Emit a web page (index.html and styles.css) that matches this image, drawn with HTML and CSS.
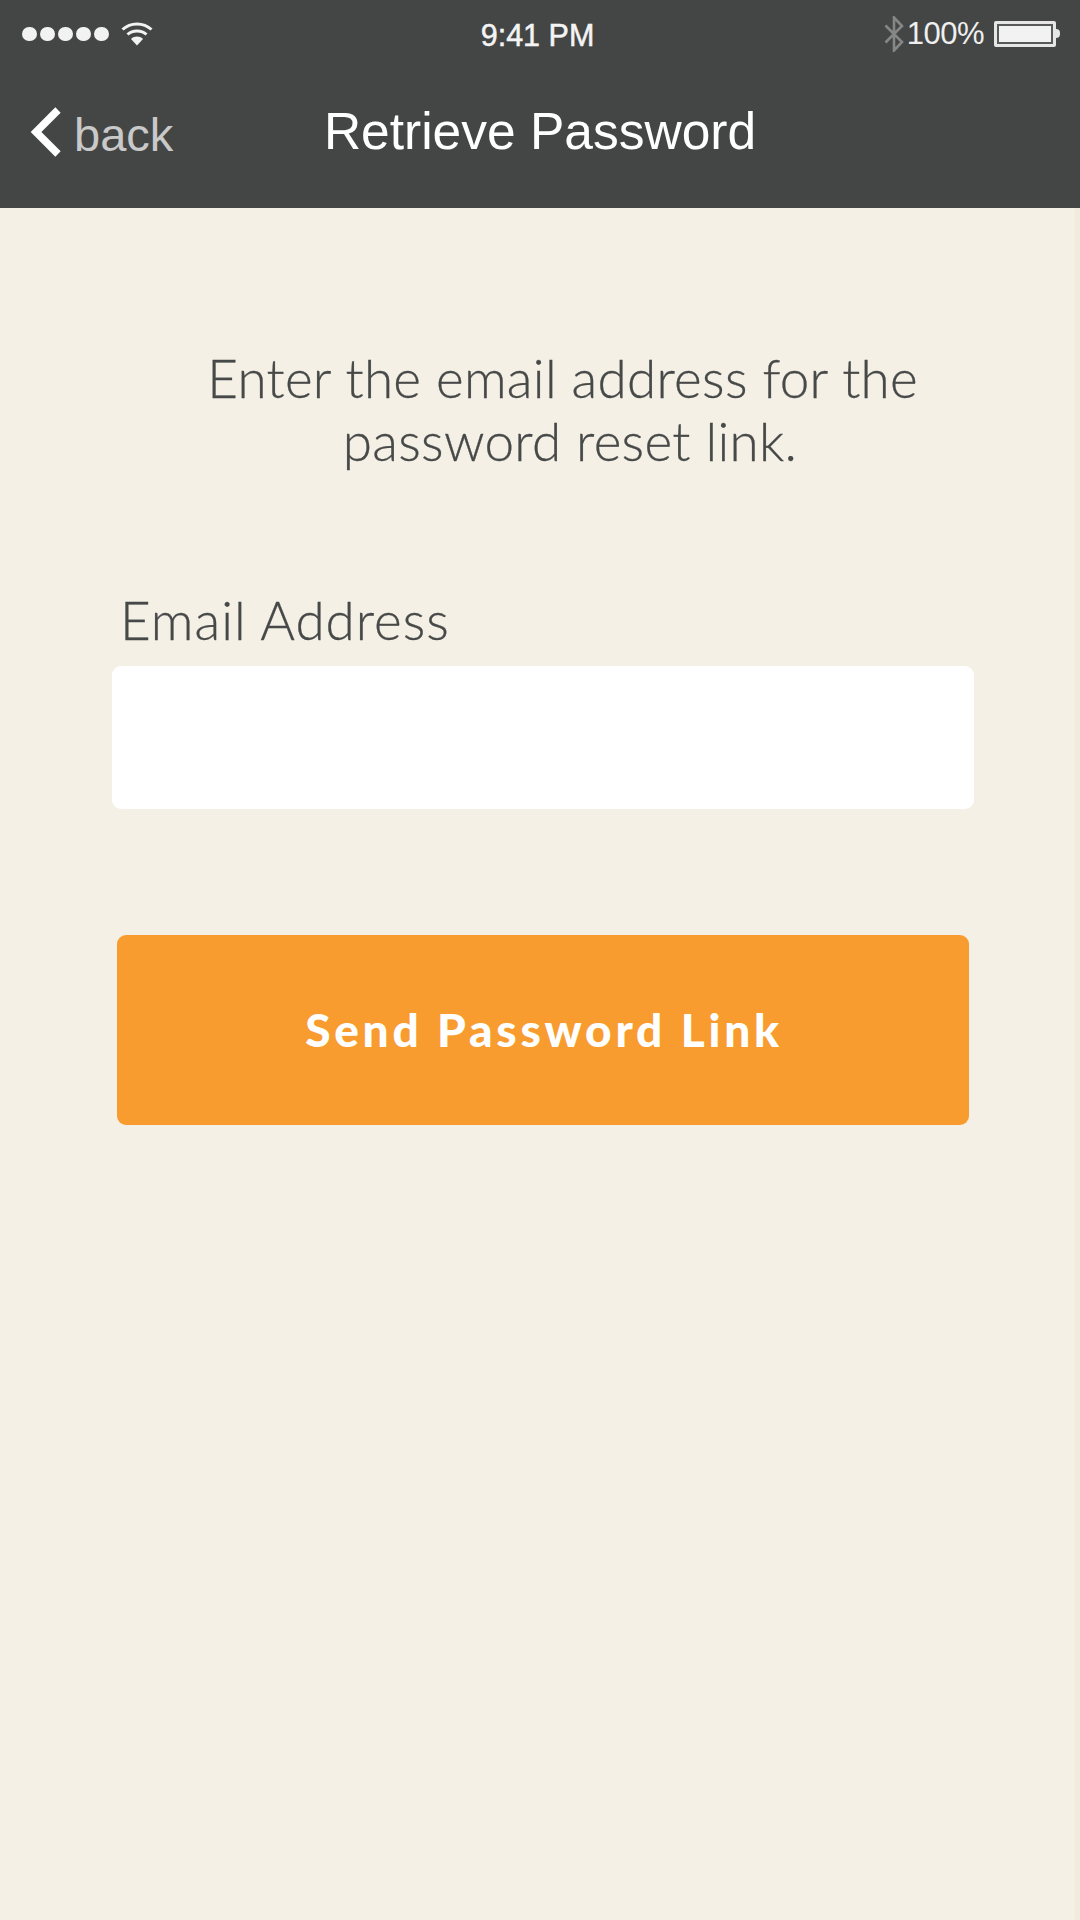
FILE: index.html
```html
<!DOCTYPE html>
<html lang="en">
<head>
<meta charset="utf-8">
<title>Retrieve Password</title>
<link rel="stylesheet" href="styles.css">
</head>
<body>
<div class="screen">
  <header class="topbar">
    <div class="status">
      <div class="status-left">
        <span class="dots"><i></i><i></i><i></i><i></i><i></i></span>
        <svg class="wifi" width="32" height="26" viewBox="0 0 32 26">
          <path d="M1.5 8.5C9.5 1 22.5 1 30.5 8.5" fill="none" stroke="#f2f2f2" stroke-width="3"/>
          <path d="M6.5 13.5C11.5 8.8 20.5 8.8 25.5 13.5" fill="none" stroke="#f2f2f2" stroke-width="3"/>
          <path d="M10 18L16 24.5L22 18C18.5 14.8 13.5 14.8 10 18Z" fill="#f2f2f2"/>
        </svg>
      </div>
      <div class="status-time">9:41 PM</div>
      <div class="status-right">
        <svg class="bt" width="20" height="36" viewBox="0 0 20 36">
          <path d="M1.5 9.5L18 26L10 34.500V1.500L18 10L1.500 26.500" fill="none" stroke="#868686" stroke-width="2.600"/>
        </svg>
        <span class="pct">100%</span>
        <span class="battery"><span class="battery-fill"></span></span>
      </div>
    </div>
    <div class="navbar">
      <div class="back">
        <svg class="chevron" width="32" height="52" viewBox="0 0 32 52">
          <path d="M28 4L6 26L28 48" fill="none" stroke="#fff" stroke-width="7.500"/>
        </svg>
        <span class="back-label">back</span>
      </div>
      <h1 class="title">Retrieve Password</h1>
      <div></div>
    </div>
  </header>
  <main class="content">
    <p class="intro">Enter the email address for the&nbsp;<br>password reset link.</p>
    <label class="field-label" for="email">Email Address</label>
    <input class="field" id="email" type="text">
    <button class="send" type="button">Send Password Link</button>
  </main>
</div>
</body>
</html>
```
FILE: styles.css
```css
* { box-sizing: border-box; }
html, body { margin: 0; padding: 0; }
body { width: 1080px; height: 1920px; overflow: hidden; font-family: "Liberation Sans", Arial, sans-serif; }
.screen { width: 1080px; height: 1920px; display: flex; flex-direction: column; background: #f4f0e6; }

.topbar { height: 208px; background: #444645; color: #fff; flex: none; }
.status { height: 68px; display: grid; grid-template-columns: 1fr auto 1fr; align-items: center; padding: 0 21px 0 22px; }
.status-left { display: flex; align-items: center; gap: 12px; }
.dots { display: flex; gap: 3.500px; }
.dots i { width: 14.500px; height: 14.500px; border-radius: 50%; background: #f2f2f2; display: block; }
.wifi { display: block; }
.status-time { font-size: 30.500px; color: #f4f4f4; -webkit-text-stroke: 0.5px #f4f4f4; position: relative; left: -3px; top: 1px; }
.status-right { display: flex; align-items: center; justify-content: flex-end; }
.bt { display: block; margin-right: 3px; }
.pct { font-size: 31px; letter-spacing: -0.5px; color: #efefef; margin-right: 10px; }
.battery { width: 62px; height: 26px; border: 3px solid #e6e6e6; border-radius: 2px; padding: 2px; display: block; position: relative; background: #585a59; margin-right: 3px; }
.battery::after { content: ""; position: absolute; right: -7px; top: 5px; width: 4px; height: 9px; background: #e6e6e6; border-radius: 0 4px 4px 0; }
.battery-fill { display: block; height: 100%; background: #f2f2f2; }

.navbar { height: 140px; display: grid; grid-template-columns: 1fr auto 1fr; align-items: center; padding: 0 30px; margin-top: -6px; }
.back { display: flex; align-items: center; gap: 12px; }
.chevron { display: block; }
.back-label { font-size: 47px; color: #c9c9c9; position: relative; top: 2px; }
.title { margin: 0; font-size: 51.500px; font-weight: 400; color: #fff; position: relative; top: -1px; }

.content { flex: 1; display: flex; flex-direction: column; padding: 0 105px 0 112px; box-shadow: inset -6px 0 3px -1px #f1ebdc; color: #474948; font-family: Lato, sans-serif; font-weight: 300; }
.intro { margin: 138px 0 0; padding-left: 53px; font-size: 53px; line-height: 63px; letter-spacing: 0.3px; text-align: center; white-space: nowrap; -webkit-text-stroke: 0.3px #474948; }
.field-label { margin-top: 118px; padding-left: 8px; font-size: 53px; line-height: 60px; letter-spacing: 1px; -webkit-text-stroke: 0.3px #474948; }
.field { display: block; width: 862px; height: 143px; margin-top: 16px; border: 0; border-radius: 9px; background: #fff; }
.send { display: block; width: 852px; height: 190px; margin: 126px 0 0 5px; padding: 0 0 1px 2px; border: 0; border-radius: 9px; background: #f99c2f; color: #fff; font-family: Lato, sans-serif; font-weight: 900; font-size: 46px; letter-spacing: 3.750px; }
```
